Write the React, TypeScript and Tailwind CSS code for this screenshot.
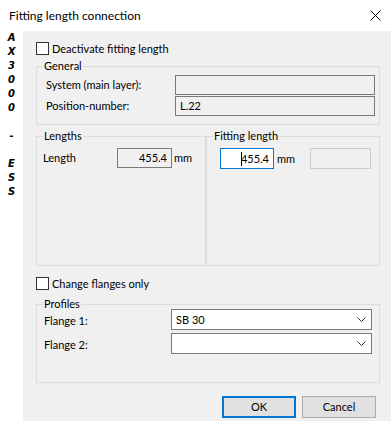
import React from "react";

function Checkbox({ label }: { label: string }) {
  return (
    <div className="flex items-center h-[13px]">
      <div className="w-[13px] h-[13px] border border-[#333333] bg-white shrink-0" />
      <span className="ml-[3px] leading-[16px]">{label}</span>
    </div>
  );
}

function Group({
  title,
  className,
  children,
}: {
  title: string;
  className?: string;
  children?: React.ReactNode;
}) {
  return (
    <div className={"relative border border-[#dcdcdc] " + (className ?? "")}>
      <span className="absolute left-[6px] top-[-9px] bg-[#f0f0f0] px-[1px] leading-[16px]">
        {title}
      </span>
      {children}
    </div>
  );
}

function Chevron() {
  return (
    <svg width="9" height="5" viewBox="0 0 9 5" className="shrink-0">
      <polyline points="0.5,0.5 4.5,4.5 8.5,0.5" fill="none" stroke="#333333" strokeWidth="1" />
    </svg>
  );
}

export default function App() {
  const letters = ["A", "X", "3", "0", "0", "0", "\u00a0", "-", "\u00a0", "E", "S", "S"];
  return (
    <div className="w-[391px] h-[424px] bg-white flex flex-col font-['Lato',sans-serif] text-[11px] text-black leading-[16px]">
      <div className="h-[31px] flex items-center justify-between pl-[9px] pr-[10px] shrink-0">
        <span className="text-[12px]">Fitting length connection</span>
        <svg width="11" height="11" viewBox="0 0 11 11">
          <line x1="0.5" y1="0.5" x2="10.5" y2="10.5" stroke="#000" strokeWidth="1" />
          <line x1="10.5" y1="0.5" x2="0.5" y2="10.5" stroke="#000" strokeWidth="1" />
        </svg>
      </div>
      <div className="flex h-[390px] shrink-0">
        <div className="w-[23px] shrink-0 flex flex-col items-center font-['DejaVu_Sans',sans-serif] font-bold italic text-[10px] leading-[14px]">
          {letters.map((l, i) => (
            <span key={i}>{l}</span>
          ))}
        </div>
        <div className="flex-1 bg-[#f0f0f0] pl-[13px] pr-[11px] pt-[11px] flex flex-col">
          <Checkbox label="Deactivate fitting length" />

          <Group title="General" className="mt-[11px] h-[59px] pt-[8px] pl-[9px] pr-[4px] flex flex-col gap-[1px]">
            <div className="flex items-center justify-between h-[20px]">
              <span>System (main layer):</span>
              <div className="w-[200px] h-[20px] border border-[#7a7a7a] bg-[#f0f0f0]" />
            </div>
            <div className="flex items-center justify-between h-[20px]">
              <span>Position-number:</span>
              <div className="w-[200px] h-[20px] border border-[#7a7a7a] bg-[#f0f0f0] flex items-center pl-[4px]">
                L.22
              </div>
            </div>
          </Group>

          <div className="mt-[11px] h-[130px] flex">
            <Group title="Lengths" className="w-[170px] h-full pt-[11px] pl-[6px]">
              <div className="flex items-center h-[20px]">
                <span className="w-[74px]">Length</span>
                <div className="w-[55px] h-[20px] border border-[#7a7a7a] bg-[#f0f0f0] flex items-center justify-end pr-[4px]">
                  455.4
                </div>
                <span className="pl-[2px]">mm</span>
              </div>
            </Group>
            <Group title="Fitting length" className="flex-1 h-full pt-[11px] pl-[13px]">
              <div className="flex items-center h-[21px]">
                <div className="w-[54px] h-[21px] border border-[#0078d7] bg-white flex items-center justify-end pr-[4px]">
                  <span className="inline-block w-[1px] h-[14px] bg-black mr-[-1px]" />
                  455.4
                </div>
                <span className="w-[36px] pl-[3px]">mm</span>
                <div className="w-[61px] h-[21px] border border-[#cccccc] bg-[#f0f0f0]" />
              </div>
            </Group>
          </div>

          <div className="mt-[11px]">
            <Checkbox label="Change flanges only" />
          </div>

          <Group title="Profiles" className="mt-[14px] h-[79px] pt-[4px] pl-[7px] pr-[7px] flex flex-col gap-[3px]">
            <div className="flex items-start h-[21px]">
              <span className="w-[127px] pt-[4px]">Flange 1:</span>
              <div className="flex-1 h-[21px] border border-[#7a7a7a] bg-white flex items-center justify-between pl-[4px] pr-[5px]">
                <span>SB 30</span>
                <Chevron />
              </div>
            </div>
            <div className="flex items-start h-[21px]">
              <span className="w-[127px] pt-[4px]">Flange 2:</span>
              <div className="flex-1 h-[21px] border border-[#7a7a7a] bg-white flex items-center justify-end pl-[4px] pr-[5px]">
                <Chevron />
              </div>
            </div>
          </Group>

          <div className="mt-[13px] flex justify-end gap-[6px] pr-[4px]">
            <button className="w-[74px] h-[22px] border-2 border-[#0078d7] bg-[#e1e1e1] flex items-center justify-center">
              OK
            </button>
            <button className="w-[74px] h-[22px] border border-[#adadad] bg-[#e1e1e1] flex items-center justify-center">
              Cancel
            </button>
          </div>
        </div>
      </div>
    </div>
  );
}
